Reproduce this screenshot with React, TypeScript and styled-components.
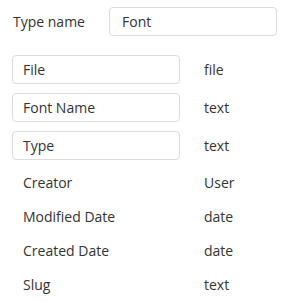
import React from "react";
import styled, { createGlobalStyle } from "styled-components";

const GlobalStyle = createGlobalStyle`
  body {
    margin: 0;
    background: #fff;
    font-family: "Open Sans", "Noto Sans", sans-serif;
    font-size: 14px;
    color: #333;
  }
`;

const Wrapper = styled.div`
  width: 283px;
  padding: 7px 0 0 0;
  box-sizing: border-box;
`;

const NameRow = styled.div`
  display: flex;
  align-items: center;
  padding-left: 13px;
  margin-bottom: 19px;
`;

const NameLabel = styled.span`
  width: 96px;
`;

const Field = styled.div<{ $width: number; $pad: number }>`
  box-sizing: border-box;
  width: ${(p) => p.$width}px;
  height: 29px;
  border: 1px solid #dcdcdc;
  border-radius: 4px;
  padding-left: ${(p) => p.$pad}px;
  display: flex;
  align-items: center;
  line-height: 1;
`;

const FieldList = styled.div`
  display: flex;
  flex-direction: column;
  gap: 9px;
  padding-left: 12px;
`;

const FieldRow = styled.div`
  display: flex;
  align-items: center;
`;

const TypeCell = styled.span`
  margin-left: 24px;
`;

const SystemList = styled.div`
  margin-top: 5px;
  padding-left: 23px;
`;

const SystemRow = styled.div`
  display: flex;
  align-items: center;
  height: 34px;
`;

const SystemName = styled.span`
  width: 181px;
`;

const fields = [
  { name: "File", type: "file" },
  { name: "Font Name", type: "text" },
  { name: "Type", type: "text" },
];

const systemFields = [
  { name: "Creator", type: "User" },
  { name: "Modified Date", type: "date" },
  { name: "Created Date", type: "date" },
  { name: "Slug", type: "text" },
];

export default function App() {
  return (
    <>
      <GlobalStyle />
      <Wrapper>
        <NameRow>
          <NameLabel>Type name</NameLabel>
          <Field $width={168} $pad={12}>Font</Field>
        </NameRow>
        <FieldList>
          {fields.map((f) => (
            <FieldRow key={f.name}>
              <Field $width={168} $pad={10}>{f.name}</Field>
              <TypeCell>{f.type}</TypeCell>
            </FieldRow>
          ))}
        </FieldList>
        <SystemList>
          {systemFields.map((f) => (
            <SystemRow key={f.name}>
              <SystemName>{f.name}</SystemName>
              <span>{f.type}</span>
            </SystemRow>
          ))}
        </SystemList>
      </Wrapper>
    </>
  );
}
